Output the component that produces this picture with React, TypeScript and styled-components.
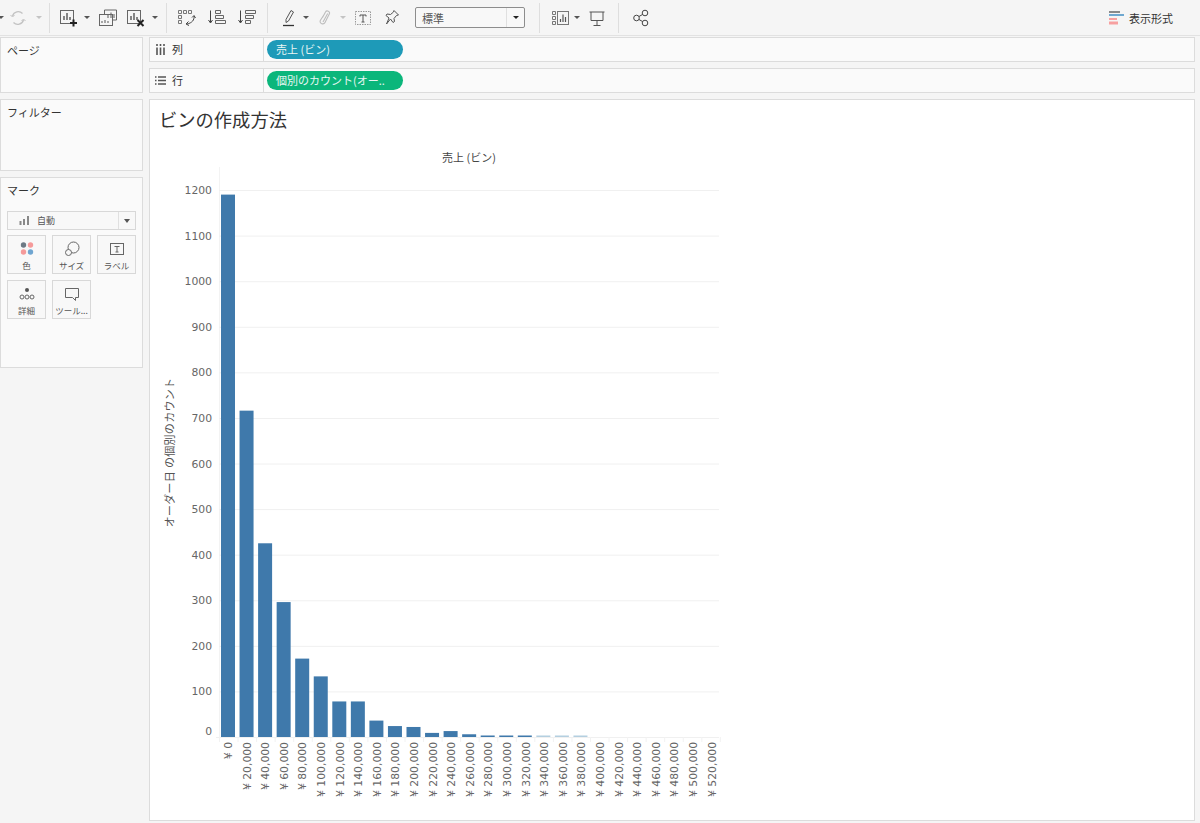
import React from "react";
import styled, { createGlobalStyle } from "styled-components";

const CJK = `"Noto Sans CJK JP", "Noto Sans", sans-serif`;

const Global = createGlobalStyle`
  html, body { margin: 0; padding: 0; height: 100%; background: #f5f5f5; overflow: hidden; }
  body { font-family: ${CJK}; color: #333; }
`;

const Page = styled.div`
  width: 1200px;
  height: 823px;
  display: flex;
  flex-direction: column;
  background: #f5f5f5;
`;

const Toolbar = styled.header`
  height: 36px;
  box-sizing: border-box;
  border-bottom: 1px solid #e2e2e2;
  display: flex;
  align-items: center;
  flex: none;
`;

const Tool = styled.svg<{ $ml?: number; $w?: number }>`
  flex: none;
  width: ${(p) => p.$w ?? 18}px;
  height: 18px;
  margin-left: ${(p) => p.$ml ?? 0}px;
  fill: none;
  stroke: #555;
  stroke-width: 1;
`;

const Caret = styled.span<{ $ml: number; $off?: boolean }>`
  flex: none;
  width: 0;
  height: 0;
  margin-left: ${(p) => p.$ml}px;
  border-left: 3px solid transparent;
  border-right: 3px solid transparent;
  border-top: 3px solid ${(p) => (p.$off ? "#c4c4c4" : "#555")};
`;

const Divider = styled.span<{ $ml: number }>`
  flex: none;
  width: 1px;
  height: 30px;
  margin-left: ${(p) => p.$ml}px;
  background: #dedede;
`;

const SelectBox = styled.div`
  flex: none;
  margin-left: 14px;
  width: 110px;
  height: 21px;
  box-sizing: border-box;
  border: 1px solid #8d8d8d;
  border-radius: 2px;
  background: #f8f8f8;
  display: flex;
  align-items: center;
  font-size: 11px;
  color: #555;
  padding-left: 6px;
`;

const SelectText = styled.span`
  flex: 1;
`;

const SelectArrow = styled.span`
  width: 17px;
  height: 100%;
  border-left: 1px solid #e0e0e0;
  display: flex;
  align-items: center;
  justify-content: center;
  &::after {
    content: "";
    border-left: 3px solid transparent;
    border-right: 3px solid transparent;
    border-top: 3px solid #222;
  }
`;

const FormatButton = styled.div`
  margin-left: auto;
  margin-right: 27px;
  display: flex;
  align-items: center;
  gap: 5px;
  font-size: 11px;
  color: #333;
`;

const Workspace = styled.div`
  flex: 1;
  display: grid;
  grid-template-columns: 143px 1046px;
  column-gap: 6px;
  padding: 1px 0 2px 0;
  min-height: 0;
`;

const Side = styled.aside`
  display: flex;
  flex-direction: column;
  gap: 6px;
`;

const Panel = styled.section<{ $h: number }>`
  height: ${(p) => p.$h}px;
  box-sizing: border-box;
  background: #fafafa;
  border: 1px solid #dcdcdc;
  padding: 4px 6px;
  font-size: 11px;
  line-height: 16px;
  color: #333;
`;

const MarkSelect = styled.div`
  margin-top: 13px;
  height: 19px;
  box-sizing: border-box;
  width: 129px;
  border: 1px solid #d8d8d8;
  background: #f8f8f8;
  display: flex;
  align-items: center;
  font-size: 9px;
  color: #555;
`;

const MarkSelectLabel = styled.span`
  flex: 1;
  display: flex;
  align-items: center;
  gap: 7px;
  padding-left: 11px;
`;

const MarkArrow = styled.span`
  width: 16px;
  height: 100%;
  border-left: 1px solid #e0e0e0;
  display: flex;
  align-items: center;
  justify-content: center;
  &::after {
    content: "";
    border-left: 3px solid transparent;
    border-right: 3px solid transparent;
    border-top: 4px solid #555;
  }
`;

const MarkGrid = styled.div`
  display: grid;
  grid-template-columns: 39px 39px 39px;
  grid-auto-rows: 39px;
  column-gap: 6px;
  row-gap: 6px;
  margin-top: 5px;
`;

const MarkCard = styled.div`
  box-sizing: border-box;
  border: 1px solid #d8d8d8;
  background: #f8f8f8;
  display: flex;
  flex-direction: column;
  align-items: center;
  padding-top: 4px;
  font-size: 8.5px;
  line-height: 11px;
  color: #555;
  white-space: nowrap;
`;

const MarkIcon = styled.svg`
  width: 18px;
  height: 18px;
  margin-bottom: 2px;
  fill: none;
  stroke: #666;
  stroke-width: 1;
  flex: none;
`;

const Main = styled.main`
  display: flex;
  flex-direction: column;
  gap: 6px;
  min-height: 0;
`;

const Shelf = styled.div`
  height: 25px;
  flex: none;
  box-sizing: border-box;
  background: #fafafa;
  border: 1px solid #dcdcdc;
  display: flex;
  align-items: center;
`;

const ShelfLabel = styled.div`
  width: 114px;
  height: 100%;
  border-right: 1px solid #dcdcdc;
  display: flex;
  align-items: center;
  gap: 6px;
  padding: 0 0 1px 5px;
  box-sizing: border-box;
  font-size: 11px;
  color: #333;
`;

const ShelfIcon = styled.svg`
  width: 11px;
  height: 11px;
  stroke: #555;
  stroke-width: 1.4;
  fill: none;
`;

const Pill = styled.div<{ $bg: string }>`
  margin-left: 3px;
  width: 136px;
  height: 19px;
  border-radius: 10px;
  background: ${(p) => p.$bg};
  color: #e8f6f4;
  font-size: 11px;
  line-height: 18px;
  padding-left: 9px;
  box-sizing: border-box;
  white-space: nowrap;
  overflow: hidden;
`;

const View = styled.section`
  flex: 1;
  min-height: 0;
  box-sizing: border-box;
  background: #fff;
  border: 1px solid #dcdcdc;
`;

const Title = styled.h1`
  margin: 0;
  height: 40px;
  padding: 6px 0 0 9px;
  box-sizing: border-box;
  font-size: 18.3px;
  line-height: 26px;
  font-weight: 400;
  color: #333;
`;

const Chart = styled.svg`
  display: block;
`;

const values = [1190, 716, 425, 296, 172, 133, 78, 78, 36, 24, 22, 9, 13, 6, 3, 3, 3, 1, 1, 1];
const ticks = [0, 100, 200, 300, 400, 500, 600, 700, 800, 900, 1000, 1100, 1200];
const Y0 = 737;
const PER = 0.4558;
const AXIS_FONT = '"DejaVu Sans", sans-serif';
const barX = (i: number) => 221 + i * 18.55;
const labelOf = (i: number) => (i === 0 ? "¥ 0" : `¥ ${(i * 20).toString()},000`);

const BinChart = () => (
  <Chart width={600} height={680} viewBox="150 140 600 680">
    <line x1={219.5} x2={219.5} y1={167} y2={Y0} stroke="#f3f3f3" />
    {ticks.map((t) => (
      <g key={t}>
        {t > 0 && (
          <line x1={219} x2={719} y1={Y0 - t * PER + 0.5} y2={Y0 - t * PER + 0.5} stroke="#f0f0f0" />
        )}
        <text
          x={212}
          y={Y0 - t * PER + (t === 0 ? -2.5 : 4)}
          textAnchor="end"
          fontFamily={AXIS_FONT}
          fontSize={10.8}
          fill="#666"
        >
          {t}
        </text>
      </g>
    ))}
    <line x1={216} x2={719} y1={737.5} y2={737.5} stroke="#f0f0f0" />
    {Array.from({ length: 28 }, (_, i) => (
      <line key={i} x1={219.5 + i * 18.55} x2={219.5 + i * 18.55} y1={737} y2={742} stroke="#f2f2f2" />
    ))}
    {values.map((v, i) => {
      const h = Math.max(v * PER, 1.5);
      return (
        <rect key={i} x={barX(i)} y={Y0 - h} width={14} height={h} fill={v <= 1 ? "#b4cfe0" : "#3f79ab"} />
      );
    })}
    {Array.from({ length: 27 }, (_, i) => {
      const x = 228 + i * 18.6;
      return (
        <text
          key={i}
          transform={`translate(${x + 4} 742) rotate(-90)`}
          textAnchor="end"
          fontFamily={AXIS_FONT}
          fontSize={10.8}
          fill="#666"
        >
          {labelOf(i)}
        </text>
      );
    })}
    <text x={469} y={162} textAnchor="middle" fontFamily={CJK} fontSize={11} fill="#444">
      売上 (ビン)
    </text>
    <text
      transform="translate(174 452.5) rotate(-90)"
      textAnchor="middle"
      fontFamily={CJK}
      fontSize={11}
      letterSpacing={0.3}
      fill="#555"
    >
      オーダー日 の個別のカウント
    </text>
  </Chart>
);

const ChartGlyph = () => (
  <>
    <rect x="0.5" y="1.5" width="13" height="13" stroke="#666" />
    <path d="M4 11V7M7 11V4M10 11V8" stroke="#555" strokeWidth="1.4" />
  </>
);

export default function App() {
  return (
    <Page>
      <Global />
      <Toolbar>
        <Caret $ml={-2} />
        <Tool $ml={5} viewBox="0 0 18 18" style={{ stroke: "#c2c2c2" }}>
          <path d="M3.500 7a6 6 0 0 1 10-2.500M14.500 11a6 6 0 0 1-10 2.500" strokeWidth="1.300" />
          <path d="M1.500 6l2 2 2-2M16.500 12l-2-2-2 2" strokeWidth="1" />
        </Tool>
        <Caret $ml={9} $off />
        <Divider $ml={7} />
        <Tool $ml={10} viewBox="0 0 18 18">
          <ChartGlyph />
          <path d="M10 14h7M13.500 10.500v7" stroke="#222" strokeWidth="2" />
        </Tool>
        <Caret $ml={6} />
        <Tool $ml={9} viewBox="0 0 18 18">
          <path d="M5.500 5V1h12v10h-4" stroke="#666" />
          <rect x="0.500" y="5.500" width="13" height="11" stroke="#666" />
          <path d="M9 9V5M12 9V3.500M15 9V5" stroke="#666" strokeWidth="1.100" />
          <path d="M3 14v-2M6 14v-3M9 14v-2" stroke="#666" strokeWidth="1.100" />
        </Tool>
        <Tool $ml={10} viewBox="0 0 18 18">
          <ChartGlyph />
          <path d="M10.500 11l6 6M16.500 11l-6 6" stroke="#222" strokeWidth="2" />
        </Tool>
        <Caret $ml={7} />
        <Divider $ml={8} />
        <Tool $ml={11} viewBox="0 0 18 18">
          <path d="M.5 1.500h3v3h-3zM5.500 1.500h3v3h-3zM10.500 1.500h3v3h-3zM.5 6.500h3v3h-3zM.5 11.500h3v3h-3z" stroke="#777" />
          <path d="M16 7c.5 4-2 7-7 8" stroke="#444" />
          <path d="M14 8.500l2-2 1.500 2.500M10.500 12.500L8 15l3 1.500" stroke="#444" />
        </Tool>
        <Tool $ml={12} viewBox="0 0 18 18">
          <path d="M2.500 1.500v12M.5 11l2 3 2-3" stroke="#444" />
          <path d="M7.500 1.500h5v3h-5zM7.500 6.500h8v3h-8zM7.500 11.500h10v3h-10z" stroke="#666" />
        </Tool>
        <Tool $ml={12} viewBox="0 0 18 18">
          <path d="M2.500 1.500v12M.5 11l2 3 2-3" stroke="#444" />
          <path d="M7.500 1.500h10v3h-10zM7.500 6.500h8v3h-8zM7.500 11.500h5v3h-5z" stroke="#666" />
        </Tool>
        <Divider $ml={11} />
        <Tool $ml={12} viewBox="0 0 18 18">
          <path d="M6 10.500L11 1.500l2.500 1.500-5 9-2.500 1.500z" stroke="#555" />
          <path d="M3 16.500h11" stroke="#333" strokeWidth="1.300" />
        </Tool>
        <Caret $ml={5} />
        <Tool $ml={7} viewBox="0 0 18 18" style={{ stroke: "#bdbdbd" }}>
          <path
            d="M6.500 8.500l3-5.500c1.200-2.200 5-.5 3.800 2L9 13.500c-1.200 2.500-6 1.300-4.700-2L8.800 4.500M7 13l4.700-8.500"
            strokeWidth="1.100"
          />
        </Tool>
        <Caret $ml={6} $off />
        <Tool $ml={8} viewBox="0 0 18 18">
          <rect x="1.500" y="2.500" width="15" height="13" stroke="#999" strokeDasharray="1.500 1" />
          <path d="M6 6h6M9 6v7M7.500 13h3M6 6v1.500M12 6v1.500" stroke="#555" />
        </Tool>
        <Tool $ml={11} viewBox="0 0 18 18">
          <path d="M11 1.500l4.500 4.500-2 .5-2.500 3 .5 3-1.500 1-2.500-3.500-4 5 2.500-6-3-2.500 1-1.500 3.500.5 3-2.500z" stroke="#555" />
        </Tool>
        <SelectBox>
          <SelectText>標準</SelectText>
          <SelectArrow />
        </SelectBox>
        <Divider $ml={14} />
        <Tool $ml={11} viewBox="0 0 18 18">
          <path d="M1.500 2.500h3v3h-3zM1.500 7.500h3v3h-3zM1.500 12.500h3v3h-3z" stroke="#777" />
          <rect x="6.500" y="2.500" width="11" height="13" stroke="#777" />
          <path d="M9.500 13v-3M12 13V5.500M14.500 13V8" stroke="#555" strokeWidth="1.200" />
        </Tool>
        <Caret $ml={5} />
        <Tool $ml={8} viewBox="0 0 18 18">
          <path d="M1.500 3h15M3 3v8.500h12V3M9 11.500v5M5.500 16.500h7" stroke="#555" />
        </Tool>
        <Divider $ml={12} />
        <Tool $ml={13} viewBox="0 0 18 18">
          <circle cx="4.500" cy="9" r="2.800" stroke="#444" />
          <circle cx="13" cy="4" r="2.800" stroke="#444" />
          <circle cx="13" cy="14" r="2.800" stroke="#444" />
          <path d="M7 7.500l3.500-2M7 10.500l3.500 2" stroke="#444" />
        </Tool>
        <FormatButton>
          <Tool viewBox="0 0 15 18" $w={15}>
            <path d="M0 3h11" stroke="#8a8a8a" strokeWidth="2" />
            <path d="M0 6h15" stroke="#6fa8d0" strokeWidth="2" />
            <path d="M0 10h8" stroke="#f7a0a0" strokeWidth="2" />
            <path d="M0 14h9" stroke="#f7a0a0" strokeWidth="3" />
          </Tool>
          表示形式
        </FormatButton>
      </Toolbar>
      <Workspace>
        <Side>
          <Panel $h={56}>ページ</Panel>
          <Panel $h={72}>フィルター</Panel>
          <Panel $h={191}>
            マーク
            <MarkSelect>
              <MarkSelectLabel>
                <svg width="11" height="9" viewBox="0 0 11 9">
                  <path d="M1.500 9V5M5 9V3M9 9V0" stroke="#888" strokeWidth="2" />
                </svg>
                自動
              </MarkSelectLabel>
              <MarkArrow />
            </MarkSelect>
            <MarkGrid>
              <MarkCard>
                <MarkIcon viewBox="0 0 18 18">
                  <circle cx="5.500" cy="5" r="2.700" fill="#6d7a85" stroke="none" />
                  <circle cx="12.500" cy="5" r="2.700" fill="#f59a9a" stroke="none" />
                  <circle cx="5.500" cy="12" r="2.700" fill="#f59a9a" stroke="none" />
                  <circle cx="12.500" cy="12" r="2.700" fill="#6fa5d0" stroke="none" />
                </MarkIcon>
                色
              </MarkCard>
              <MarkCard>
                <MarkIcon viewBox="0 0 18 18">
                  <circle cx="10.500" cy="7.500" r="5.500" />
                  <circle cx="5.500" cy="12.500" r="3" fill="#f8f8f8" />
                </MarkIcon>
                サイズ
              </MarkCard>
              <MarkCard>
                <MarkIcon viewBox="0 0 18 18">
                  <rect x="2.500" y="3.500" width="13" height="11" />
                  <path d="M6.500 6.500h5M9 6.500v5.500M7.500 12h3" />
                </MarkIcon>
                ラベル
              </MarkCard>
              <MarkCard>
                <MarkIcon viewBox="0 0 18 18">
                  <circle cx="9" cy="5" r="2" fill="#555" stroke="none" />
                  <circle cx="4" cy="12" r="2" />
                  <circle cx="9" cy="12" r="2" />
                  <circle cx="14" cy="12" r="2" />
                </MarkIcon>
                詳細
              </MarkCard>
              <MarkCard>
                <MarkIcon viewBox="0 0 18 18">
                  <path d="M2.500 3.500h13v9h-3v3l-3-3h-7z" />
                </MarkIcon>
                ツール...
              </MarkCard>
            </MarkGrid>
          </Panel>
        </Side>
        <Main>
          <Shelf>
            <ShelfLabel>
              <ShelfIcon viewBox="0 0 11 11">
                <path d="M2 3.500V11M5.500 3.500V11M9 3.500V11" strokeWidth="1.600" />
                <path d="M2 0v2M5.500 0v2M9 0v2" strokeWidth="1.600" />
              </ShelfIcon>
              列
            </ShelfLabel>
            <Pill $bg="#1e9ab8">売上 (ビン)</Pill>
          </Shelf>
          <Shelf>
            <ShelfLabel>
              <ShelfIcon viewBox="0 0 11 11">
                <path d="M3 2h8M3 5.500h8M3 9h8M0 2h1.500M0 5.500h1.500M0 9h1.500" />
              </ShelfIcon>
              行
            </ShelfLabel>
            <Pill $bg="#0bb67b">個別のカウント(オー..</Pill>
          </Shelf>
          <View>
            <Title>ビンの作成方法</Title>
            <BinChart />
          </View>
        </Main>
      </Workspace>
    </Page>
  );
}
